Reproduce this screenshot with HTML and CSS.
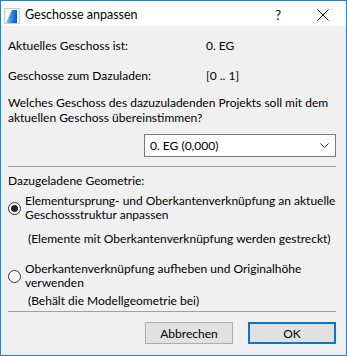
FILE: index.html
```html
<!DOCTYPE html>
<html>
<head>
  <title>Geschosse anpassen</title>
  <link rel="stylesheet" href="styles.css">
</head>
<body>
<div class="window">
  <div class="titlebar">
    <svg class="app-icon" width="16" height="16" viewBox="0 0 16 16">
      <defs>
        <linearGradient id="g" x1="0" y1="0" x2="1" y2="0">
          <stop offset="0" stop-color="#9cc8f4"/>
          <stop offset="0.5" stop-color="#2f8be6"/>
          <stop offset="1" stop-color="#0a5cc4"/>
        </linearGradient>
      </defs>
      <rect x="0.5" y="0.5" width="15" height="15" fill="#f4f6f9" stroke="#c9ced6"/>
      <path d="M2 15 L8 2 L13 2 L13 15 Z" fill="url(#g)"/>
    </svg>
    <span class="title">Geschosse anpassen</span>
    <span class="help">?</span>
    <svg class="close" width="12" height="12" viewBox="0 0 12 12">
      <path d="M0.5 0.5 L11.5 11.5 M11.5 0.5 L0.5 11.5" stroke="#111" stroke-width="1"/>
    </svg>
  </div>

  <div class="content">
    <div class="info-row row-first">
      <span class="label">Aktuelles Geschoss ist:</span>
      <span>0. EG</span>
    </div>
    <div class="info-row row-second">
      <span class="label">Geschosse zum Dazuladen:</span>
      <span>[0 .. 1]</span>
    </div>
    <p class="question">Welches Geschoss des dazuzuladenden Projekts soll mit dem<br>aktuellen Geschoss übereinstimmen?</p>

    <div class="select-row">
      <div class="select">
        <span>0. EG (0,000)</span>
        <svg width="9" height="5" viewBox="0 0 9 5">
          <path d="M0.5 0.5 L4.5 4.5 L8.5 0.5" fill="none" stroke="#333"/>
        </svg>
      </div>
    </div>

    <div class="separator sep-top"></div>

    <div class="section-title">Dazugeladene Geometrie:</div>

    <div class="radio radio-first">
      <span class="radio-dot checked"></span>
      <span class="radio-label">Elementursprung- und Oberkantenverknüpfung an aktuelle<br>Geschossstruktur anpassen</span>
    </div>
    <div class="hint hint-first">(Elemente mit Oberkantenverknüpfung werden gestreckt)</div>

    <div class="radio radio-second">
      <span class="radio-dot"></span>
      <span class="radio-label">Oberkantenverknüpfung aufheben und Originalhöhe<br>verwenden</span>
    </div>
    <div class="hint hint-second">(Behält die Modellgeometrie bei)</div>

    <div class="separator sep-bottom"></div>

    <div class="buttons">
      <button class="btn">Abbrechen</button>
      <button class="btn btn-default">OK</button>
    </div>
  </div>
</div>
</body>
</html>
```

FILE: styles.css
```css
body {
    margin: 0;
    font-family: "Lato", "Noto Sans", sans-serif;
    font-size: 12px;
    color: #000;
}
.window {
    width: 347px;
    height: 356px;
    box-sizing: border-box;
    border: 1px solid #1883d7;
    background: #f0f0f0;
    display: flex;
    flex-direction: column;
}
.titlebar {
    height: 25px;
    background: #fff;
    display: flex;
    align-items: center;
}
.app-icon {
    margin-left: 3px;
    margin-top: 4px;
}
.title {
    margin-left: 5px;
    margin-top: 2px;
    font-size: 12.5px;
}
.help {
    margin-left: auto;
    margin-right: 36px;
    font-size: 13px;
    margin-top: 2px;
}
.close {
    margin-right: 17px;
    margin-top: 2px;
}
.content {
    padding: 12px 10px 0 7px;
    white-space: nowrap;
}
.info-row {
    display: grid;
    grid-template-columns: 198px auto;
    line-height: 16px;
}
.row-second {
    margin-top: 14px;
}
.question {
    margin: 11px 0 0;
    line-height: 15px;
}
.select-row {
    margin-top: 9px;
    display: flex;
    justify-content: flex-end;
}
.select {
    width: 192px;
    height: 23px;
    box-sizing: border-box;
    border: 1px solid #7a7a7a;
    background: #fff;
    display: flex;
    align-items: center;
    justify-content: space-between;
    padding: 0 6px 0 5px;
}
.separator {
    height: 1px;
    background: #a0a0a0;
}
.sep-top {
    margin-top: 9px;
}
.section-title {
    margin-top: 6px;
    line-height: 16px;
}
.radio {
    display: flex;
    align-items: center;
}
.radio-first {
    margin-top: 5px;
}
.radio-second {
    margin-top: 15px;
}
.radio-dot {
    flex: none;
    width: 13px;
    height: 13px;
    box-sizing: border-box;
    border: 1px solid #333;
    border-radius: 50%;
    background: #fff;
    margin-right: 4px;
    position: relative;
}
.radio-dot.checked::after {
    content: "";
    position: absolute;
    left: 2px;
    top: 2px;
    width: 7px;
    height: 7px;
    border-radius: 50%;
    background: #222;
}
.radio-label {
    line-height: 14px;
}
.hint {
    padding-left: 20px;
    line-height: 16px;
}
.hint-first {
    margin-top: 9px;
}
.hint-second {
    margin-top: 3px;
}
.sep-bottom {
    margin-top: 2px;
}
.buttons {
    margin-top: 10px;
    display: flex;
    justify-content: flex-end;
    gap: 15px;
}
.btn {
    width: 88px;
    height: 22px;
    box-sizing: border-box;
    font-family: inherit;
    font-size: 12px;
    background: #e1e1e1;
    border: 1px solid #adadad;
    padding: 0;
    color: #000;
}
.btn-default {
    border: 2px solid #0078d7;
}
```
